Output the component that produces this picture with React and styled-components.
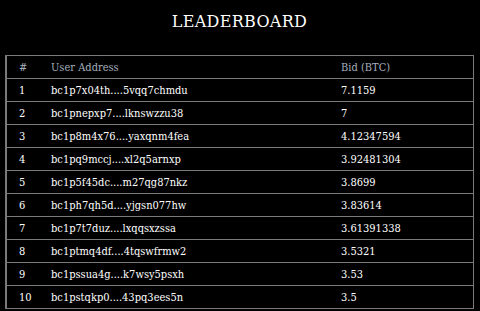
import styled, { createGlobalStyle } from 'styled-components';

const GlobalStyle = createGlobalStyle`
  body {
    margin: 0;
    background: #000;
    color: #fff;
    font-family: "DejaVu Serif Condensed", "DejaVu Serif", serif;
  }
`;

const rows = [
  ['1', 'bc1p7x04th....5vqq7chmdu', '7.1159'],
  ['2', 'bc1pnepxp7....lknswzzu38', '7'],
  ['3', 'bc1p8m4x76....yaxqnm4fea', '4.12347594'],
  ['4', 'bc1pq9mccj....xl2q5arnxp', '3.92481304'],
  ['5', 'bc1p5f45dc....m27qg87nkz', '3.8699'],
  ['6', 'bc1ph7qh5d....yjgsn077hw', '3.83614'],
  ['7', 'bc1p7t7duz....lxqqsxzssa', '3.61391338'],
  ['8', 'bc1ptmq4df....4tqswfrmw2', '3.5321'],
  ['9', 'bc1pssua4g....k7wsy5psxh', '3.53'],
  ['10', 'bc1pstqkp0....43pq3ees5n', '3.5'],
];

export default function App() {
  return (
    <Page>
      <GlobalStyle />
      <Title>LEADERBOARD</Title>
      <Table>
        <colgroup>
          <col style={{ width: 33 }} />
          <col style={{ width: 290 }} />
          <col />
        </colgroup>
        <thead>
          <tr>
            <HeadCell>#</HeadCell>
            <HeadCell>User Address</HeadCell>
            <HeadCell>Bid (BTC)</HeadCell>
          </tr>
        </thead>
        <tbody>
          {rows.map(([rank, address, bid]) => (
            <tr key={rank}>
              <Cell>{rank}</Cell>
              <Cell>{address}</Cell>
              <Cell>{bid}</Cell>
            </tr>
          ))}
        </tbody>
      </Table>
    </Page>
  );
}

const Page = styled.div`
  padding: 13px 6px 0 5px;
`;

const Title = styled.h1`
  margin: 0 0 25px;
  text-align: center;
  font-family: "DejaVu Serif", serif;
  font-size: 16px;
  font-weight: normal;
  line-height: 17px;
  letter-spacing: 0.3px;
`;

const Table = styled.table`
  width: 100%;
  table-layout: fixed;
  border-collapse: collapse;
  border: 1px solid #7a7a7a;
  border-left-width: 2px;
  font-family: "DejaVu Serif Condensed", "DejaVu Serif", serif;
  font-size: 11px;
`;

const HeadCell = styled.th`
  height: 22px;
  padding: 0 0 0 12px;
  text-align: left;
  font-family: inherit;
  font-weight: normal;
  color: #a3afbd;
  border-bottom: 1px solid #7a7a7a;
`;

const Cell = styled.td`
  height: 22px;
  padding: 0 0 0 12px;
  font-family: inherit;
  border-bottom: 1px solid #7a7a7a;
`;
